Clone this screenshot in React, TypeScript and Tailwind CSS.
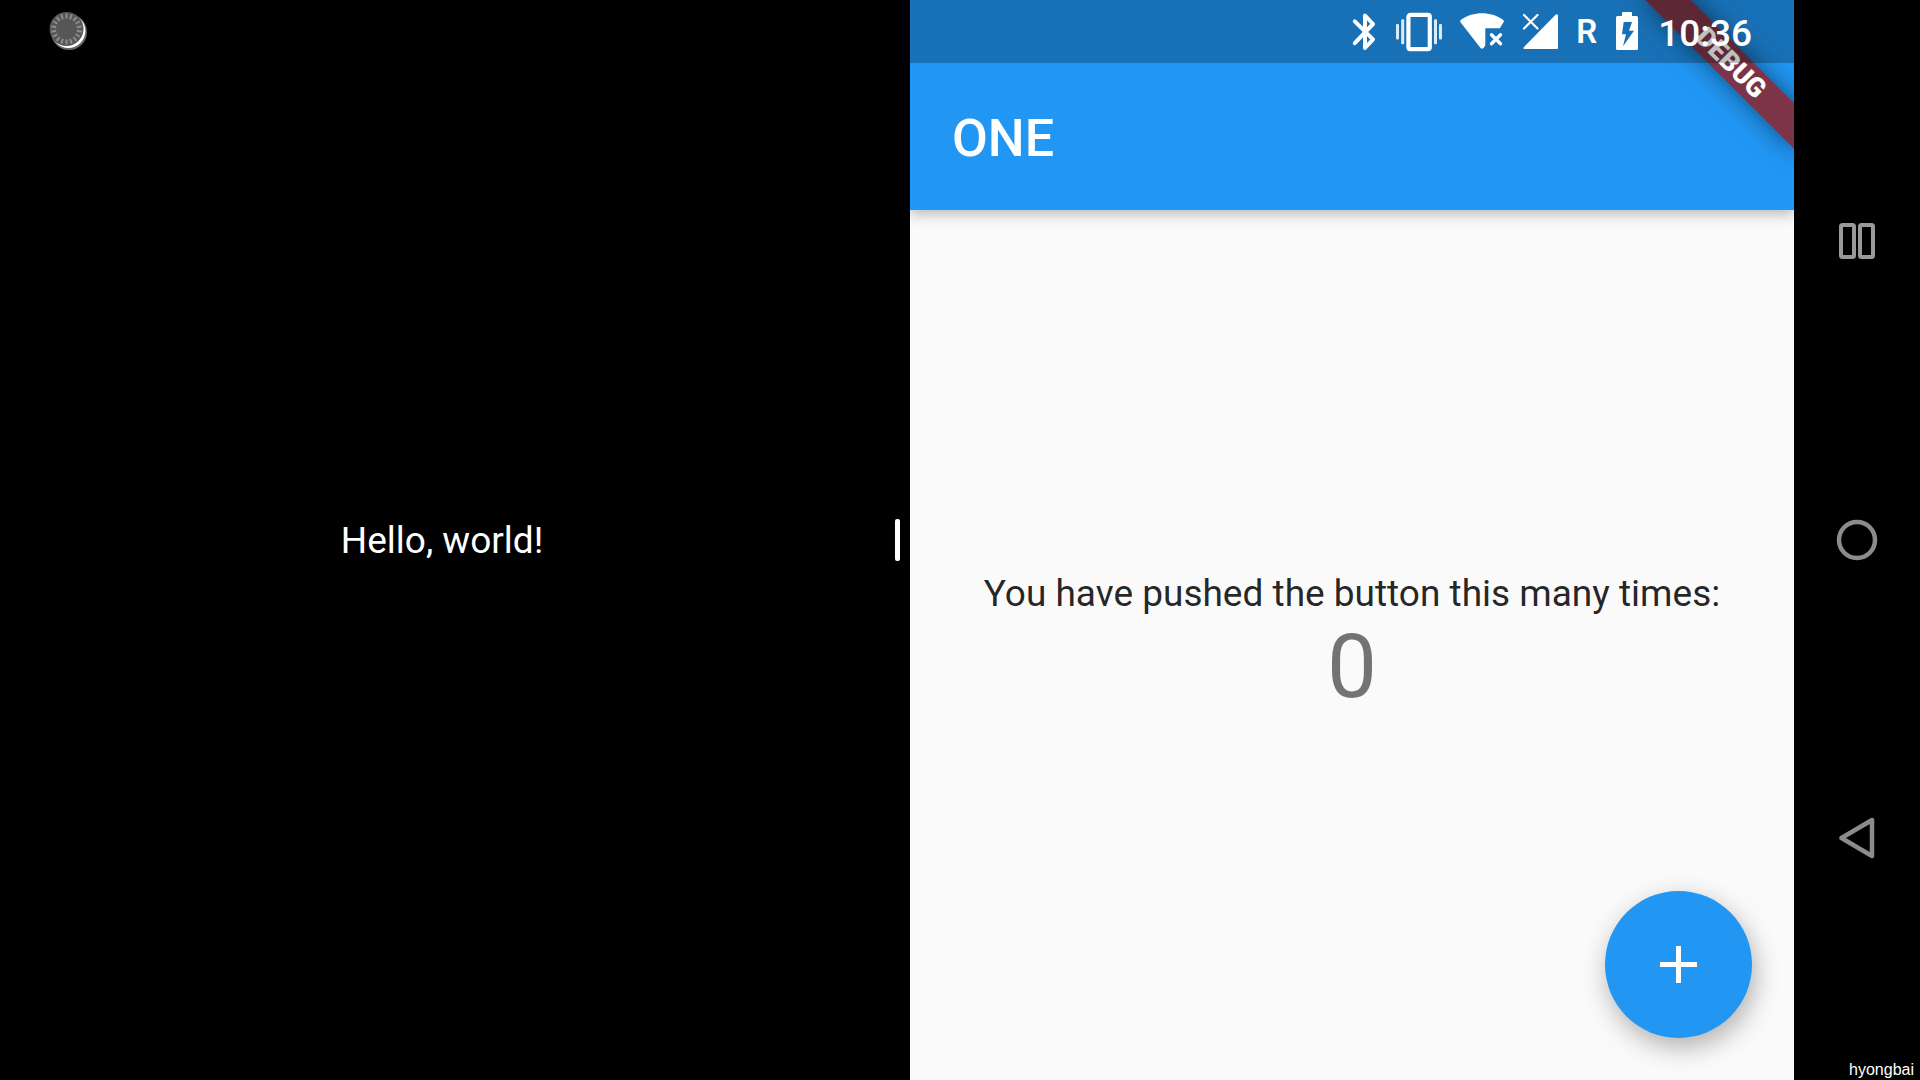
import React, { useState } from "react";

const TICKS = Array.from({ length: 18 }, (_, i) => i * 20);

function TouchDot() {
  return (
    <svg className="absolute top-2 left-11 size-12" viewBox="0 0 48 48" aria-hidden="true">
      <circle cx="25" cy="24" r="18" fill="#666" />
      <circle cx="24.4" cy="23" r="17" fill="#fff" />
      <circle cx="22.5" cy="21" r="17" fill="#565656" />
      {TICKS.map((a) => (
        <path key={a} d="M22.5 5.5v5" stroke="#8c8c8c" strokeWidth="2" transform={`rotate(${a} 22.5 21)`} />
      ))}
    </svg>
  );
}

function StatusBar() {
  return (
    <div className="absolute inset-x-0 top-0 flex h-[63px] items-center justify-end gap-[18px] bg-black/25 pr-[42px] text-white">
      <svg className="h-10 w-7" viewBox="0 0 28 40" fill="none" stroke="currentColor" strokeWidth="4" strokeLinecap="round" strokeLinejoin="round" role="img" aria-label="Bluetooth">
        <path d="M4.8 9.3 23 27.3 15 36V3.5L23 12 4.8 31.2" />
      </svg>
      <svg className="h-10 w-[46px]" viewBox="0 0 46 40" fill="currentColor" role="img" aria-label="Vibrate">
        <rect x="12.4" y="2.8" width="21.4" height="34.4" rx="2" fill="none" stroke="currentColor" strokeWidth="4.2" />
        <g fillOpacity="0.85">
          <rect x="0" y="12" width="3" height="15.5" rx="1" />
          <rect x="5.2" y="7.2" width="3" height="25" rx="1" />
          <rect x="38" y="7.2" width="3" height="25" rx="1" />
          <rect x="43" y="12" width="3" height="15.5" rx="1" />
        </g>
      </svg>
      <svg className="h-10 w-11" viewBox="0 0 44 40" role="img" aria-label="Wi-Fi not connected">
        <path fill="currentColor" d="M.5 10.3Q-.4 8.8 1 7.8C13-.8 31-.8 43 7.8Q44.4 8.8 43.5 10.3L39.8 16.3H25.3V33.5L23.5 36Q22 37.4 20.5 36Z" />
        <path d="m31.5 22.8 9 9m0-9-9 9" stroke="currentColor" strokeWidth="3.4" strokeLinecap="round" />
      </svg>
      <svg className="h-10 w-9" viewBox="0 0 36 40" role="img" aria-label="No mobile signal">
        <path fill="currentColor" d="M33.8 2.5Q36 1.4 36 3.8V35.8Q36 37 34.8 37H2.5Q.6 37 1.8 35.2Z" />
        <path d="m2 3 13.5 13.5M15.5 3 2 16.5" stroke="currentColor" strokeWidth="2.2" strokeLinecap="round" />
      </svg>
      <span className="w-[19px] text-center text-[33px] leading-10 font-semibold">R</span>
      <svg className="h-10 w-[27px]" viewBox="0 0 27 40" role="img" aria-label="Battery charging">
        <path fill="currentColor" fillRule="evenodd" d="M9 1Q9 0 10 0h8q1 0 1 1v3h4.5Q25 4 25 5.5v31q0 1.5-1.5 1.5h-19Q3 38 3 36.5v-31Q3 4 4.5 4H9ZM10.700 10 9 22.300h4L10 34.300 21 18.700h-5L19 10Z" />
      </svg>
      <time className="pt-1 text-[37px] leading-[63px] font-medium">10:36</time>
    </div>
  );
}

export default function App() {
  const [count, setCount] = useState(0);
  return (
    <div className="relative flex min-h-screen bg-black font-['Roboto',sans-serif] select-none">
      <section className="relative flex flex-1 items-center justify-center">
        <TouchDot />
        <p className="text-[37px] leading-[43px] text-white">Hello, world!</p>
      </section>

      <div role="separator" aria-orientation="vertical" className="flex w-[26px] items-center justify-end pr-2.5">
        <div className="h-[42px] w-[5px] rounded-[2px] bg-white" />
      </div>

      <main className="relative flex flex-1 flex-col overflow-hidden bg-[#fafafa]">
        <header className="z-10 flex h-[210px] items-center bg-[#2196f3] px-[42px] pt-[67px] shadow-[0_4px_13px_rgba(0,0,0,0.27)]">
          <h1 className="text-[52px] leading-[62px] font-medium text-white">ONE</h1>
        </header>
        <div className="flex flex-1 flex-col items-center justify-center">
          <p className="text-[37px] leading-[43px] whitespace-nowrap text-black/87">
            You have pushed the button this many times:
          </p>
          <output className="text-[89px] leading-[104px] text-black/54">{count}</output>
        </div>
        <button
          type="button"
          aria-label="Increment"
          onClick={() => setCount(count + 1)}
          className="absolute right-[42px] bottom-[42px] flex size-[147px] items-center justify-center rounded-full bg-[#2196f3] text-white shadow-[3px_9px_26px_rgba(0,0,0,0.3)]"
        >
          <svg className="size-[37px]" viewBox="0 0 37 37" fill="currentColor" aria-hidden="true">
            <path d="M16 0h5v16h16v5H21v16h-5V21H0v-5h16Z" />
          </svg>
        </button>
        <div className="pointer-events-none absolute inset-0 z-20">
          <div className="absolute top-[47px] -right-[42px] flex h-8 w-[210px] rotate-45 items-center justify-center bg-[#7d3448] shadow-[0_0_24px_rgba(0,0,0,0.5)]">
            <span className="text-[27px] leading-8 font-black text-white">DEBUG</span>
          </div>
          <StatusBar />
        </div>
      </main>

      <nav aria-label="System" className="flex w-[126px] flex-col py-[91px] text-[#8c8c8c]">
        <button type="button" aria-label="Recent apps" className="flex flex-1 items-center justify-center">
          <svg className="size-11" viewBox="0 0 44 44" fill="none" stroke="#999" strokeWidth="4">
            <rect x="6" y="6" width="13" height="32" rx="1.5" />
            <rect x="25" y="6" width="13" height="32" rx="1.5" />
          </svg>
        </button>
        <button type="button" aria-label="Home" className="flex flex-1 items-center justify-center">
          <svg className="size-11" viewBox="0 0 44 44" fill="none" stroke="currentColor" strokeWidth="4.5">
            <circle cx="22" cy="22" r="18" />
          </svg>
        </button>
        <button type="button" aria-label="Back" className="flex flex-1 items-center justify-center">
          <svg className="size-11" viewBox="0 0 44 44" fill="none" stroke="currentColor" strokeWidth="4.5" strokeLinejoin="round">
            <path d="M37 3v36L6.5 21Z" />
          </svg>
        </button>
      </nav>

      <span className="absolute right-1.5 bottom-0 font-['Liberation_Sans',sans-serif] text-base leading-5 text-white">
        hyongbai
      </span>
    </div>
  );
}
